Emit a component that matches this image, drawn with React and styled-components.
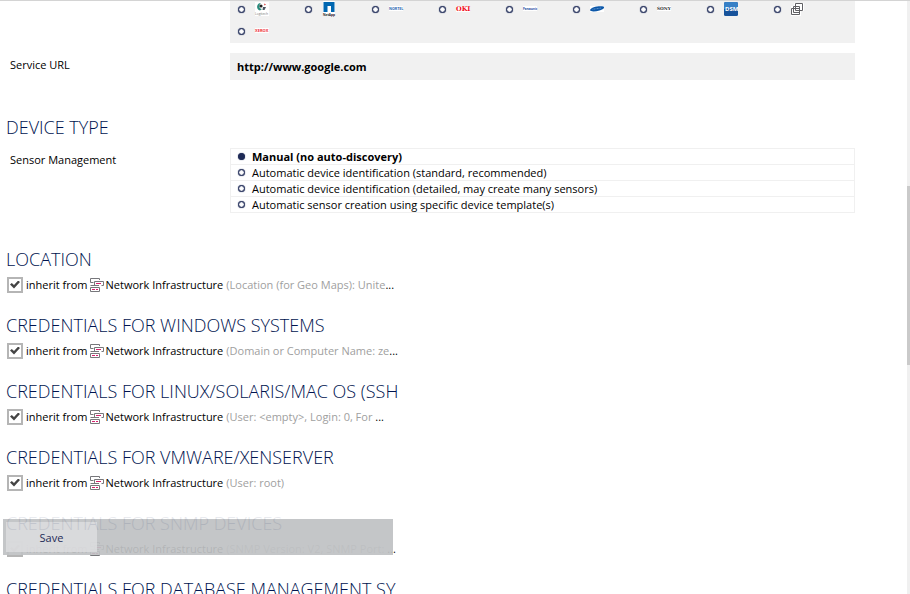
import React, { Component } from 'react';
import styled, { createGlobalStyle } from 'styled-components';

const GlobalStyle = createGlobalStyle`
    * {
        box-sizing: border-box;
    }
    body {
        margin: 0;
        background: #fff;
        color: #000;
        font-family: "Open Sans", "Noto Sans", sans-serif;
        font-size: 11px;
        line-height: 16px;
    }
`;

const Page = styled.div`
    position: relative;
    height: 100vh;
    overflow: hidden;
    border-top: 1px solid #d4d4d4;
`;

const Form = styled.form`
    display: flex;
    flex-direction: column;
    padding-right: 55px;
`;

const Field = styled.div`
    display: grid;
    grid-template-columns: 220px 1fr;
    padding-left: 10px;
    margin-bottom: ${({ $gap }) => $gap}px;
`;

const FieldLabel = styled.label`
    padding-top: 4px;
`;

const IconPanel = styled.div`
    grid-column: 2;
    display: flex;
    flex-wrap: wrap;
    height: 42px;
    padding-left: 8px;
    background: #f1f1f1;
`;

const IconOption = styled.label`
    display: flex;
    align-items: center;
    gap: 10px;
    width: 67px;
    height: 22px;
    margin-top: -3px;
    margin-bottom: 3px;
`;

const Radio = styled.input`
    appearance: none;
    flex: none;
    width: 7px;
    height: 7px;
    margin: 0;
    border: 1px solid #1f2b57;
    border-radius: 50%;
    background: #fff;
    box-shadow: inset 0 0 1px #1f2b57, 0 0 1px #1f2b57;

    &:checked {
        background: #1f2b57;
    }
`;

const UrlInput = styled.input`
    width: 100%;
    height: 27px;
    padding: 0 7px;
    border: none;
    background: #f1f1f1;
    color: #000;
    font: bold 11px "Open Sans", "Noto Sans", sans-serif;
`;

const Heading = styled.h2`
    position: relative;
    z-index: ${({ $faded }) => ($faded ? 1 : 'auto')};
    opacity: ${({ $faded }) => ($faded ? 0.1 : 1)};
    margin: 0;
    padding-left: 6px;
    width: 399px;
    overflow: hidden;
    white-space: nowrap;
    color: #00144f;
    font: 300 18px/24px "Open Sans", "Noto Sans", sans-serif;
`;

const OptionList = styled.div`
    border: 1px solid #f0f0f0;
    border-bottom: none;
`;

const Option = styled.label`
    display: flex;
    align-items: center;
    gap: 7px;
    height: 16px;
    padding-left: 7px;
    border-bottom: 1px solid #f0f0f0;
    font-weight: ${({ $bold }) => ($bold ? 'bold' : 'normal')};
`;

const FieldGroup = styled.section`
    display: flex;
    flex-direction: column;
    gap: 9px;
`;

const Section = styled.section`
    display: flex;
    flex-direction: column;
    gap: 5px;
    height: 66px;
`;

const InheritRow = styled.div`
    display: flex;
    align-items: center;
    height: 17px;
    padding-left: 7px;
    white-space: nowrap;
`;

const InheritLabel = styled.label`
    display: flex;
    align-items: center;
    gap: 3px;
`;

const Checkbox = styled.input`
    appearance: none;
    display: grid;
    place-items: center;
    width: 16px;
    height: 16px;
    margin: 0;
    border: 2px solid #b5b5b5;
    background: #fff;

    &:checked::after {
        content: '';
        width: 10px;
        height: 8px;
        background: #444;
        clip-path: polygon(0 50%, 18% 30%, 40% 55%, 82% 0, 100% 20%, 40% 100%);
    }
`;

const ParentName = styled.span`
    display: flex;
    align-items: center;
    gap: 2px;
    margin-left: 2px;
`;

const Summary = styled.span`
    margin-left: 3px;
    > span {
        color: #a0a0a0;
    }
`;

const SaveBar = styled.div`
    position: absolute;
    left: 3px;
    bottom: 39px;
    width: 390px;
    height: 36px;
    padding: 3px;
    background: rgba(192, 194, 196, 0.93);
`;

const SaveButton = styled.button`
    display: block;
    width: 91px;
    height: 30px;
    border: none;
    background: rgba(222, 223, 225, 0.8);
    color: #1f2b57;
    font: 11px "Open Sans", "Noto Sans", sans-serif;
`;

const ScrollTrack = styled.div`
    position: absolute;
    top: 0;
    right: 0;
    bottom: 0;
    width: 3px;
    background: #f0f0f0;
`;

const ScrollThumb = styled.div`
    height: 179px;
    margin-top: 185px;
    background: #cacaca;
`;

const Logo = styled.svg`
    flex: none;
    display: block;
    overflow: visible;
`;

const logos = {
    Logitech: (
        <>
            <rect width="14" height="14" y="1" fill="#fff" />
            <path d="M6 2C1 2 1 9 5 9.500L7 8C4 8 3.500 4 6 2Z" fill="#2a8c7d" />
            <circle cx="6" cy="5" r="1.600" fill="#222" />
            <path d="M8 6h3L9.500 9H7.500z" fill="#4a5560" />
            <path d="M9 2.500l2 1-1.500 1z" fill="#d43a3a" />
            <text x="0" y="14" fontSize="3.300" fill="#777">Logitech</text>
        </>
    ),
    NetApp: (
        <>
            <rect x="1" y="0" width="12" height="15" fill="#fff" />
            <path d="M1.500 1h11v10H9V5H5.500v6h-4z" fill="#0067b1" />
            <text x="1" y="14.500" fontSize="3.200" fontWeight="bold" fill="#222">NetApp</text>
        </>
    ),
    Nortel: (
        <>
            <rect y="5" width="14" height="5" fill="#fff" />
            <text x="0" y="9" fontSize="3.600" fontWeight="bold" fill="#2364ad">NORTEL</text>
        </>
    ),
    OKI: (
        <>
            <rect y="5" width="14" height="6" fill="#fff" />
            <text x="0" y="10" fontSize="6.500" fontWeight="bold" fontFamily="DejaVu Serif, serif" fill="#f00c18">OKI</text>
        </>
    ),
    Panasonic: (
        <>
            <rect y="5" width="14" height="5" fill="#fff" />
            <text x="0" y="9" fontSize="2.800" fontWeight="bold" fill="#1749a0">Panasonic</text>
        </>
    ),
    Samsung: (
        <>
            <rect y="5" width="14" height="6" fill="#fff" />
            <path d="M0 9C1 6 9 4.500 13.500 5.500c1.500 1 0 3-4 4-4 1-9 1.500-9.500-.500z" fill="#0c57a8" />
            <path d="M2.500 8.300l9-1.300" stroke="#b8d3ec" strokeWidth=".500" strokeDasharray="1 .500" />
        </>
    ),
    Sony: (
        <>
            <rect y="5" width="14" height="5" fill="#fff" />
            <text x="0" y="9" fontSize="4.300" fontWeight="bold" fontFamily="DejaVu Serif, serif" fill="#333">SONY</text>
        </>
    ),
    DSM: (
        <>
            <rect y="1" width="14" height="14" rx="1.500" fill="#17539b" />
            <path d="M0 8V2.500Q0 1 1.500 1h11Q14 1 14 2.500V8z" fill="#3680c6" />
            <text x="1" y="10" fontSize="6" fontWeight="bold" fill="#fff">DSM</text>
        </>
    ),
    Generic: (
        <>
            <path d="M0 5h3V2h10v8h-3v5H0z" fill="#fff" />
            <path d="M4.500 2.500h7v7h-7zM2.500 5.500h6v6h-6zM.500 7.500h8v6h-8z" fill="none" stroke="#606064" />
        </>
    ),
    Xerox: (
        <>
            <rect y="5" width="14" height="5" fill="#fff" />
            <text x="0" y="9" fontSize="4" fontWeight="bold" fill="#ee2b35">XEROX</text>
        </>
    ),
};

const managementOptions = [
    'Manual (no auto-discovery)',
    'Automatic device identification (standard, recommended)',
    'Automatic device identification (detailed, may create many sensors)',
    'Automatic sensor creation using specific device template(s)',
];

const sections = [
    { title: 'LOCATION', summary: '(Location (for Geo Maps): Unite', more: true },
    { title: 'CREDENTIALS FOR WINDOWS SYSTEMS', summary: '(Domain or Computer Name: ze', more: true },
    { title: 'CREDENTIALS FOR LINUX/SOLARIS/MAC OS (SSH', summary: '(User: <empty>, Login: 0, For ', more: true },
    { title: 'CREDENTIALS FOR VMWARE/XENSERVER', summary: '(User: root)' },
    { title: 'CREDENTIALS FOR SNMP DEVICES', summary: '(SNMP Version: V2, SNMP Port: ', more: true, faded: true },
    { title: 'CREDENTIALS FOR DATABASE MANAGEMENT SY' },
];

const GroupIcon = () => (
    <Logo width="14" height="14" viewBox="0 0 14 14" fill="none" aria-hidden="true">
        <path d="M9.500 2v-1.500h-9v4h3M4.500 7v-3.500h9v4h-2M.500 7.500h8.500M.500 9.500h9v4h-9z" stroke="#77777b" />
        <path d="M6 5.500h5M2 11.500h3M6 11.500h2" stroke="#d6246e" />
    </Logo>
);

class InheritSection extends Component {
    render() {
        const { title, summary, more, faded } = this.props;
        return (
            <Section>
                <Heading $faded={faded}>{title}</Heading>
                {summary && (
                    <InheritRow>
                        <InheritLabel>
                            <Checkbox type="checkbox" defaultChecked />
                            inherit from
                        </InheritLabel>
                        <ParentName>
                            <GroupIcon />
                            Network Infrastructure
                        </ParentName>
                        <Summary>
                            <span>{summary}</span>
                            {more && '...'}
                        </Summary>
                    </InheritRow>
                )}
            </Section>
        );
    }
}

class App extends Component {
    render() {
        return (
            <Page>
                <GlobalStyle />
                <Form onSubmit={(e) => e.preventDefault()}>
                    <Field $gap={10}>
                        <IconPanel role="radiogroup" aria-label="Device Icon">
                            {Object.keys(logos).map((name) => (
                                <IconOption key={name}>
                                    <Radio type="radio" name="icon" aria-label={name} />
                                    <Logo width="14" height="16" viewBox="0 0 14 16">{logos[name]}</Logo>
                                </IconOption>
                            ))}
                        </IconPanel>
                    </Field>
                    <Field $gap={35}>
                        <FieldLabel htmlFor="url">Service URL</FieldLabel>
                        <UrlInput id="url" type="text" defaultValue="http://www.google.com" />
                    </Field>
                    <FieldGroup>
                        <Heading>DEVICE TYPE</Heading>
                        <Field $gap={34}>
                            <FieldLabel as="span" id="management">Sensor Management</FieldLabel>
                            <OptionList role="radiogroup" aria-labelledby="management">
                                {managementOptions.map((text, i) => (
                                    <Option key={text} $bold={i === 0}>
                                        <Radio type="radio" name="management" defaultChecked={i === 0} />
                                        {text}
                                    </Option>
                                ))}
                            </OptionList>
                        </Field>
                    </FieldGroup>
                    {sections.map((section) => (
                        <InheritSection key={section.title} {...section} />
                    ))}
                </Form>
                <SaveBar>
                    <SaveButton type="button">Save</SaveButton>
                </SaveBar>
                <ScrollTrack>
                    <ScrollThumb />
                </ScrollTrack>
            </Page>
        );
    }
}

export default App;
